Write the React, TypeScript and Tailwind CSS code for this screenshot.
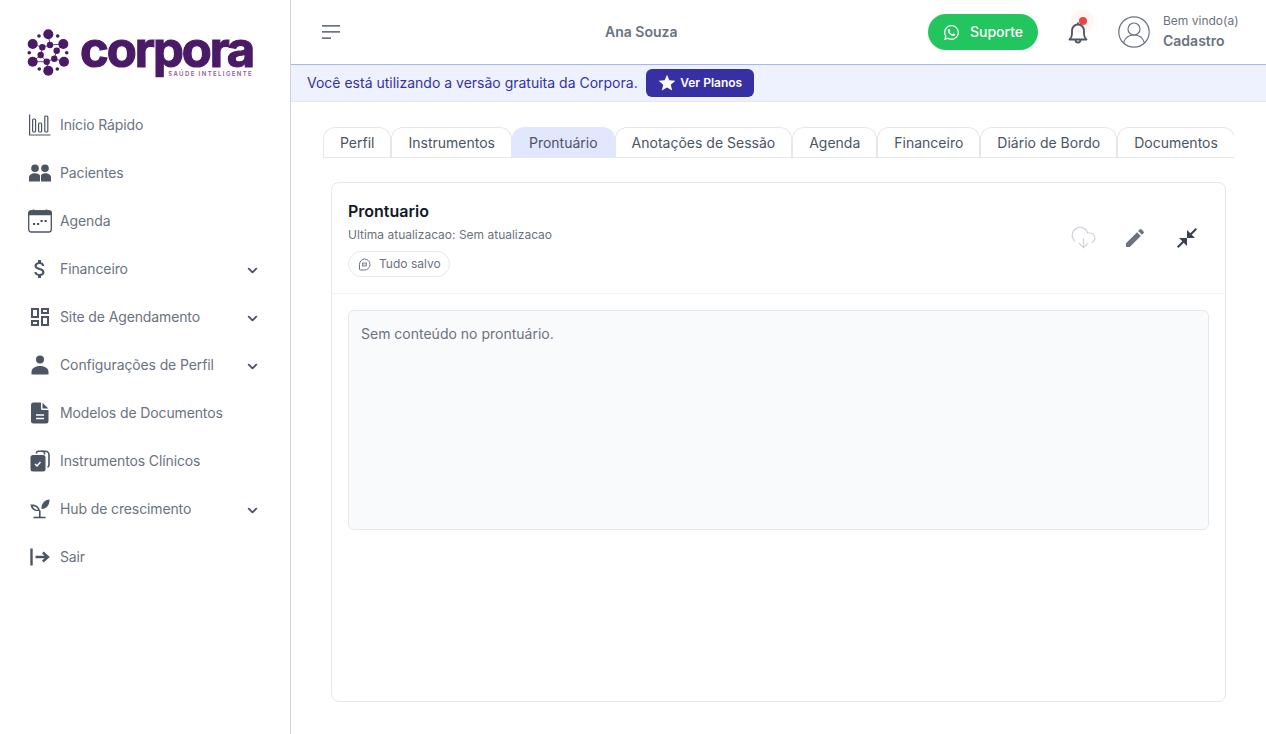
import { ChevronDown, CloudDownload } from "lucide-react";
import { FaWhatsapp } from "react-icons/fa";
import { MdAttachMoney, MdCloseFullscreen, MdEdit, MdOutlineDashboard, MdStar } from "react-icons/md";
import type { ReactNode } from "react";

// Logo dots in page coordinates: [cx, cy, r]
const logoDots = [
  [48.3, 34.3, 5], [32.7, 44, 5], [63.3, 44, 5], [32.7, 61.7, 5], [64, 61.7, 5], [48.3, 70.7, 5],
  [39, 36, 1.8], [57.7, 36, 1.8], [29.3, 52.7, 1.8], [66.7, 52.7, 1.8], [39.3, 69, 1.8], [57.3, 69, 1.8],
  [50, 45, 3.2], [42.3, 47.3, 3.2], [56.7, 50.7, 3.2], [40.7, 55, 3.2], [46.7, 61.7, 3.2], [54.3, 58.7, 3.2],
];

function LogoMark() {
  return (
    <svg width="44" height="50" viewBox="27 28 44 50" fill="#4a1a66" className="shrink-0">
      <g stroke="#4a1a66" strokeWidth="0.8" fill="none">
        <path d="M48.3 34.300L50 45L63.300 44M32.700 44L42.300 47.300L50 45M56.700 50.700L63.300 44M64 61.700L54.300 58.700L56.700 50.700M32.700 61.700L40.700 55L42.300 47.300M48.300 70.700L46.700 61.700L40.700 55M46.700 61.700L54.300 58.700M32.700 61.700L46.700 61.700" />
      </g>
      {logoDots.map(([cx, cy, r]) => (
        <circle key={`${cx}-${cy}`} cx={cx} cy={cy} r={r} />
      ))}
    </svg>
  );
}

function ChartIcon() {
  return (
    <svg width="22" height="22" viewBox="0 0 22 22" fill="none" stroke="#4b5563" strokeWidth="1.2">
      <path d="M0.6 0.5V21H21.5" />
      <rect x="3.6" y="5" width="3" height="13" rx="1" />
      <rect x="9.6" y="9" width="3" height="9" rx="1" />
      <rect x="15.8" y="2" width="3" height="16" rx="1" />
    </svg>
  );
}

function PeopleIcon() {
  return (
    <svg width="22" height="18" viewBox="0 0 22 18" fill="#4b5563">
      <circle cx="6" cy="4.200" r="3.800" />
      <circle cx="16" cy="4.200" r="3.800" />
      <path d="M0 17.500V13.500C0 11 2.500 9.300 6 9.300c2 0 4 .7 5 2.200v6z" />
      <path d="M12 17.500v-6.300c1-1.200 2.400-1.900 4-1.900 3.500 0 6 1.700 6 4.200v4z" />
    </svg>
  );
}

function CalendarIcon() {
  return (
    <svg width="24" height="24" viewBox="0 0 24 24" fill="none" stroke="#4b5563" strokeWidth="1.3">
      <rect x="0.7" y="2" width="22.6" height="21" rx="2.5" />
      <path d="M0.7 5.500V4.500a2.500 2.500 0 0 1 2.500-2.500h17.600a2.500 2.500 0 0 1 2.500 2.500v1z" fill="#4b5563" />
      <path d="M5.500 0.500V3M18.500 0.500V3" strokeWidth="1.500" />
      <path d="M5 15h2.200M9 15h2.200M12.500 12h2.200M16.500 12h2.200" strokeWidth="2.200" />
    </svg>
  );
}

function PersonIcon() {
  return (
    <svg width="18" height="20" viewBox="0 0 18 20" fill="#4b5563">
      <circle cx="9" cy="4.500" r="4" />
      <path d="M0.500 19.500V17c0-3.500 3.500-6 8.500-6s8.500 2.500 8.500 6v2.500z" />
    </svg>
  );
}

function DocIcon() {
  return (
    <svg width="18" height="22" viewBox="0 0 18 22">
      <path fill="#4b5563" d="M2.500 0.500H10V6.500a1.500 1.500 0 0 0 1.500 1.500H17.500V19a2.500 2.500 0 0 1-2.500 2.500H2.500A2.500 2.500 0 0 1 0 19V3a2.500 2.500 0 0 1 2.500-2.500z" />
      <path fill="#4b5563" d="M11.500 0.800L17.300 6.600H11.500z" />
      <path stroke="#fff" strokeWidth="1.400" d="M5 13h8M5 16.500h8" />
    </svg>
  );
}

function ClipboardIcon() {
  return (
    <svg width="20" height="22" viewBox="0 0 20 22">
      <path fill="none" stroke="#4b5563" strokeWidth="1.600" d="M6.500 3.500V3a1.800 1.800 0 0 1 1.800-1.800h7.200A3.500 3.500 0 0 1 19 4.700V15a2.500 2.500 0 0 1-1.500 2.200" />
      <path fill="none" stroke="#4b5563" strokeWidth="1.600" d="M11.500 1.500A2 2 0 0 1 14.500 3.500V4.500" />
      <rect x="0.500" y="5" width="15" height="16.500" rx="2.500" fill="#4b5563" />
      <path fill="none" stroke="#fff" strokeWidth="1.500" d="M5 14l2 2 3.500-4" />
    </svg>
  );
}

function SproutIcon() {
  return (
    <svg width="20" height="20" viewBox="0 0 20 20" fill="#4b5563">
      <path d="M9 19v-7.500h1.600V19z" />
      <path d="M3.500 17.700h12v1.600h-12z" />
      <path d="M0.500 5.500c4.500-.5 9 1.500 9.500 6.500-4.800.6-9-1-9.500-6.500zM2.700 7.300c.8 2.400 2.900 3.700 5.400 3.500-.6-2-2.700-3.300-5.400-3.500z" fillRule="evenodd" />
      <path d="M19.500 0.500c.2 5.500-2.700 9.200-8 9.500-.4-5.300 3.200-9.300 8-9.500z" />
    </svg>
  );
}

function ExitIcon() {
  return (
    <svg width="20" height="18" viewBox="0 0 20 18" fill="none" stroke="#4b5563" strokeWidth="2.400">
      <path d="M1.500 0.500V17.500" />
      <path d="M5.500 9H18M12.800 4.500L18 9L12.800 13.500" />
    </svg>
  );
}

function BellIcon() {
  return (
    <svg width="20" height="24" viewBox="0 0 20 24" fill="none" stroke="#4b5563" strokeWidth="1.800" className="relative shrink-0 mt-[2px]">
      <path d="M10 1.500V3.500" />
      <path d="M1.500 18.500c1.800-1.500 2.500-3 2.500-5.500V9.500a6 6 0 0 1 12 0V13c0 2.500.7 4 2.500 5.500z" strokeLinejoin="round" />
      <path d="M7.500 19a2.500 2.500 0 0 0 5 0" />
    </svg>
  );
}

function UserCircleIcon() {
  return (
    <svg width="32" height="32" viewBox="0 0 32 32" fill="none" stroke="#6b7280" strokeWidth="1.2">
      <circle cx="16" cy="16" r="15.200" />
      <circle cx="16" cy="13" r="6" />
      <path d="M5.500 27c1.500-5 5.500-8 10.500-8s9 3 10.500 8" />
    </svg>
  );
}

function SavedIcon() {
  return (
    <svg width="13" height="13" viewBox="0 0 13 13" fill="none" stroke="#6b7280" strokeWidth="1">
      <path d="M6.500 1a5.500 5.500 0 1 1 0 11H2.500a1 1 0 0 1-1-1V6.500A5.500 5.500 0 0 1 6.500 1z" />
      <rect x="4.500" y="5" width="4" height="3" fill="#d1d5db" stroke="#6b7280" strokeWidth="0.700" />
    </svg>
  );
}

function MenuIcon() {
  return (
    <svg width="18" height="15" viewBox="0 0 18 15" fill="#6b7280">
      <rect x="0" y="0" width="18" height="1.700" />
      <rect x="0" y="6" width="18" height="1.700" />
      <rect x="0" y="12.300" width="9" height="1.700" />
    </svg>
  );
}

type NavItem = { label: string; icon: ReactNode; caret?: boolean };

const navItems: NavItem[] = [
  { label: "Início Rápido", icon: <ChartIcon /> },
  { label: "Pacientes", icon: <PeopleIcon /> },
  { label: "Agenda", icon: <CalendarIcon /> },
  { label: "Financeiro", icon: <MdAttachMoney size={26} color="#4b5563" />, caret: true },
  { label: "Site de Agendamento", icon: <MdOutlineDashboard size={24} color="#4b5563" />, caret: true },
  { label: "Configurações de Perfil", icon: <PersonIcon />, caret: true },
  { label: "Modelos de Documentos", icon: <DocIcon /> },
  { label: "Instrumentos Clínicos", icon: <ClipboardIcon /> },
  { label: "Hub de crescimento", icon: <SproutIcon />, caret: true },
  { label: "Sair", icon: <ExitIcon /> },
];

const tabs = ["Perfil", "Instrumentos", "Prontuário", "Anotações de Sessão", "Agenda", "Financeiro", "Diário de Bordo", "Documentos"];

function Sidebar() {
  return (
    <aside className="w-[291px] shrink-0 border-r border-[#d1d5db] bg-white">
      <div className="h-[101px] pl-[27px] pt-[28px] flex items-start">
        <LogoMark />
        <div className="ml-[9px] relative h-[50px]">
          <div className="mt-[2px] h-[40px] text-[#4a1a66] font-bold text-[49px] leading-[40px] tracking-[-2.100px] [-webkit-text-stroke:1.200px_#4a1a66]">corpora</div>
          <div className="absolute right-0 top-[42px] text-[#8a5ba3] text-[6px] leading-[8px] font-semibold tracking-[1.400px] whitespace-nowrap">SAÚDE INTELIGENTE</div>
        </div>
      </div>
      <nav className="flex flex-col">
        {navItems.map((item) => (
          <div key={item.label} className="h-[48px] flex items-center pl-[28px] pr-[30px]">
            <span className="w-[24px] flex justify-center shrink-0">{item.icon}</span>
            <span className="ml-[8px] flex-1 text-sm tracking-[-0.12px] text-[#6b7280]">{item.label}</span>
            {item.caret && <ChevronDown size={15} color="#4b5563" strokeWidth={3} className="mt-[2px]" />}
          </div>
        ))}
      </nav>
    </aside>
  );
}

function Header() {
  return (
    <header className="h-[65px] shrink-0 border-b border-[#a5b4fc] flex items-center pl-[31px] pr-[28px] bg-white">
      <MenuIcon />
      <div className="ml-[265px] text-sm font-semibold text-[#6b7280]">Ana Souza</div>
      <div className="ml-auto flex items-center">
        <button className="h-[36px] w-[110px] rounded-full bg-[#22c55e] text-white text-sm font-medium flex items-center justify-center gap-[10px]">
          <FaWhatsapp size={17} />
          Suporte
        </button>
        <div className="relative ml-[30px] w-[20px] h-[24px] flex items-center justify-center">
          <span className="absolute top-[-10px] left-[3px] w-[23px] h-[23px] rounded-full bg-[#fef5f5]" />
          <BellIcon />
          <span className="absolute top-[-3px] left-[11px] w-[8px] h-[8px] rounded-full bg-[#ef4444]" />
        </div>
        <div className="ml-[30px]"><UserCircleIcon /></div>
        <div className="ml-[13px] w-[75px]">
          <div className="text-xs leading-[16px] text-[#6b7280] whitespace-nowrap">Bem vindo(a)</div>
          <div className="text-sm mt-[2px] leading-[20px] font-semibold text-[#6b7280]">Cadastro</div>
        </div>
      </div>
    </header>
  );
}

function Banner() {
  return (
    <div className="h-[37px] shrink-0 bg-[#eef2ff] border-b border-[#e5e7eb] flex items-center pl-[16px]">
      <span className="text-sm text-[#3730a3]">Você está utilizando a versão gratuita da Corpora.</span>
      <button className="ml-[8px] h-[28px] w-[108px] rounded-md bg-[#3730a3] text-white text-xs font-semibold flex items-center justify-center gap-[3px]">
        <MdStar size={20} />
        Ver Planos
      </button>
    </div>
  );
}

function Tabs() {
  return (
    <div className="flex overflow-hidden border-b border-[#e5e7eb]">
      {tabs.map((tab) => (
        <div
          key={tab}
          className={
            tab === "Prontuário"
              ? "h-[30px] shrink-0 px-[16px] flex items-center text-sm text-[#4b5563] bg-[#e0e7ff] border border-b-0 border-[#e0e7ff] rounded-t-[12px] whitespace-nowrap"
              : "h-[30px] shrink-0 px-[16px] flex items-center text-sm text-[#4b5563] border border-b-0 border-[#e5e7eb] rounded-t-[12px] whitespace-nowrap"
          }
        >
          {tab}
        </div>
      ))}
    </div>
  );
}

function RecordCard() {
  return (
    <section className="mx-[8px] mt-[24px] h-[520px] rounded-lg border border-[#e5e7eb] bg-white flex flex-col">
      <div className="h-[111px] shrink-0 border-b border-[#f3f4f6] px-[16px] pt-[17px] flex justify-between">
        <div>
          <h2 className="text-base leading-[22px] font-semibold text-[#111827]">Prontuario</h2>
          <p className="mt-[5px] text-xs leading-[16px] text-[#6b7280]">Ultima atualizacao: Sem atualizacao</p>
          <div className="mt-[8px] h-[26px] w-[102px] rounded-full border border-[#e5e7eb] flex items-center pl-[9px] gap-[8px] text-xs text-[#6b7280]">
            <SavedIcon />
            Tudo salvo
          </div>
        </div>
        <div className="flex items-center gap-[28px] pr-[10px] mb-[17px]">
          <span className="w-[24px] flex justify-center">
            <CloudDownload size={27} color="#d1d5db" strokeWidth={1.100} className="shrink-0 -mt-[2px]" />
          </span>
          <MdEdit size={24} color="#6b7280" />
          <MdCloseFullscreen size={24} color="#374151" />
        </div>
      </div>
      <div className="mx-[16px] mt-[16px] h-[220px] rounded-md border border-[#e5e7eb] bg-[#f9fafb] px-[12px] pt-[12px] text-sm leading-[22px] text-[#6b7280]">
        Sem conteúdo no prontuário.
      </div>
    </section>
  );
}

export default function App() {
  return (
    <div className="h-[734px] flex overflow-hidden bg-white font-['Inter',sans-serif]">
      <Sidebar />
      <div className="flex-1 min-w-0 flex flex-col">
        <Header />
        <Banner />
        <main className="flex-1 min-w-0 px-[32px] pt-[25px]">
          <Tabs />
          <RecordCard />
        </main>
      </div>
    </div>
  );
}
